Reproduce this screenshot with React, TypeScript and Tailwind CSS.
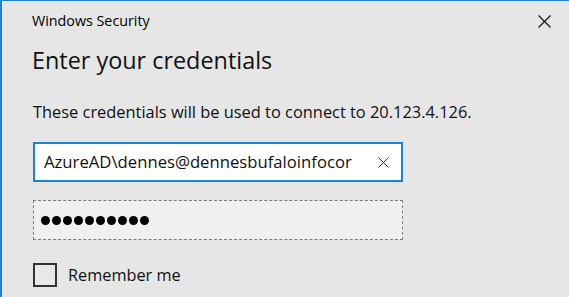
import React from "react";

export default function App() {
  return (
    <div
      className="w-[569px] h-[297px] bg-[#e6e6e6] border-t border-l-2 border-[#1883d7] overflow-hidden relative"
      style={{ fontFamily: '"Open Sans", "Noto Sans", sans-serif' }}
    >
      <div className="flex items-start justify-between">
        <div className="pl-[30px] pt-[10px] text-[14.3px] leading-[20px] text-black">Windows Security</div>
        <svg width="13" height="13" viewBox="0 0 13 13" className="mt-[14px] mr-[18px]">
          <path d="M0.5 0.5 L12.5 12.5 M12.5 0.5 L0.5 12.5" stroke="#111" strokeWidth="1.2" fill="none" />
        </svg>
      </div>
      <div className="pl-[30px] mt-[14px] text-[23.4px] leading-[30px] text-[#111]">Enter your credentials</div>
      <div className="pl-[31px] mt-[26px] text-[16.4px] leading-[22px] text-[#111]">
        These credentials will be used to connect to 20.123.4.126.
      </div>
      <div className="ml-[31px] mt-[19px] w-[370px] h-[40px] bg-white border-2 border-[#1883d7] flex items-center justify-between pl-[9px] pr-[12px]">
        <span className="text-[16.7px] text-[#111] whitespace-nowrap overflow-hidden">AzureAD\dennes@dennesbufaloinfocor</span>
        <svg width="11" height="11" viewBox="0 0 11 11" className="shrink-0">
          <path d="M0.5 0.5 L10.5 10.5 M10.5 0.5 L0.5 10.5" stroke="#333" strokeWidth="1" fill="none" />
        </svg>
      </div>
      <div className="ml-[31px] mt-[18px] w-[370px] h-[40px] bg-[#f0f0f0] border border-dashed border-[#7a7a7a] flex items-center pl-[7px]">
        <div className="flex gap-[2px]">
          {Array.from({ length: 10 }).map((_, i) => (
            <span key={i} className="w-[9px] h-[9px] rounded-full bg-black inline-block" />
          ))}
        </div>
      </div>
      <div className="ml-[31px] mt-[23px] flex items-center gap-[11px]">
        <div className="w-[24px] h-[24px] border-2 border-[#333] bg-[#e8e8e8]" />
        <span className="text-[16.3px] text-[#111]">Remember me</span>
      </div>
    </div>
  );
}
